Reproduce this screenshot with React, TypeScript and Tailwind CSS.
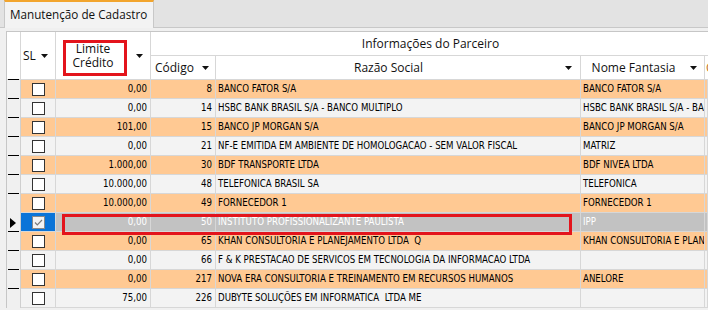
import { Fragment } from "react";

type Row = {
  limite: string;
  codigo: string;
  razao: string;
  fantasia: string;
  selected?: boolean;
};

const rows: Row[] = [
  { limite: "0,00", codigo: "8", razao: "BANCO FATOR S/A", fantasia: "BANCO FATOR S/A" },
  { limite: "0,00", codigo: "14", razao: "HSBC BANK BRASIL S/A - BANCO MULTIPLO", fantasia: "HSBC BANK BRASIL S/A - BANCO MULTIPLO" },
  { limite: "101,00", codigo: "15", razao: "BANCO JP MORGAN S/A", fantasia: "BANCO JP MORGAN S/A" },
  { limite: "0,00", codigo: "21", razao: "NF-E EMITIDA EM AMBIENTE DE HOMOLOGACAO - SEM VALOR FISCAL", fantasia: "MATRIZ" },
  { limite: "1.000,00", codigo: "30", razao: "BDF TRANSPORTE LTDA", fantasia: "BDF NIVEA LTDA" },
  { limite: "10.000,00", codigo: "48", razao: "TELEFONICA BRASIL SA", fantasia: "TELEFONICA" },
  { limite: "10.000,00", codigo: "49", razao: "FORNECEDOR 1", fantasia: "FORNECEDOR 1" },
  { limite: "0,00", codigo: "50", razao: "INSTITUTO PROFISSIONALIZANTE PAULISTA", fantasia: "IPP", selected: true },
  { limite: "0,00", codigo: "65", razao: "KHAN CONSULTORIA E PLANEJAMENTO LTDA  Q", fantasia: "KHAN CONSULTORIA E PLANEJAMENTO" },
  { limite: "0,00", codigo: "66", razao: "F & K PRESTACAO DE SERVICOS EM TECNOLOGIA DA INFORMACAO LTDA", fantasia: "" },
  { limite: "0,00", codigo: "217", razao: "NOVA ERA CONSULTORIA E TREINAMENTO EM RECURSOS HUMANOS", fantasia: "ANELORE" },
  { limite: "75,00", codigo: "226", razao: "DUBYTE SOLUÇÕES EM INFORMATICA  LTDA ME", fantasia: "" },
];

function Arrow() {
  return (
    <svg width="7" height="4" viewBox="0 0 7 4" className="shrink-0">
      <path d="M0 0h7L3.5 4z" fill="#111" />
    </svg>
  );
}

function DataRow({ row, index }: { row: Row; index: number }) {
  const orange = index % 2 === 0;
  const bg = row.selected ? "bg-[#c2c2c2] text-white" : orange ? "bg-[#ffc993] text-black" : "bg-[#f3f3f3] text-black";
  const cell = `h-[19px] border-b border-r border-[#d7d7d7] ${bg}`;
  return (
    <div className="flex">
      <div className="relative h-[19px] w-[14px] shrink-0 border-r border-[#cfcfcf] bg-[#f0f0f0]">
        {row.selected ? (
          <svg width="6" height="10" viewBox="0 0 6 10" className="absolute left-[3px] top-[5px]">
            <path d="M0 0l6 5-6 5z" fill="#000" />
          </svg>
        ) : (
          <div className="absolute left-[1px] top-[-1px] z-10 h-px w-[11px] bg-black" />
        )}
      </div>
      {row.selected ? (
        <div className="flex h-[19px] w-[35px] shrink-0 items-center justify-center border-b border-r border-[#d7d7d7] bg-[#0a74d8]">
          <svg width="13" height="13" viewBox="0 0 13 13">
            <rect x="0.5" y="0.5" width="12" height="12" fill="#f4f4f4" stroke="#8a8a8a" />
            <path d="M3 6.5l2.3 2.3L10 4" fill="none" stroke="#7a7a7a" strokeWidth="1.2" />
          </svg>
        </div>
      ) : (
        <div className={`flex h-[19px] w-[35px] shrink-0 items-center justify-center ${cell}`}>
          <div className="h-[13px] w-[13px] border border-[#333] bg-white" />
        </div>
      )}
      <div className={`${cell} relative flex w-[95px] shrink-0 items-center justify-end pr-[3px]`}>
        {row.limite}
        {row.selected && (
          <div className="pointer-events-none absolute left-[6px] top-[1px] z-20 h-[21px] w-[510px] border-[3px] border-[#e3141c]" />
        )}
      </div>
      <div className={`${cell} flex w-[65px] shrink-0 items-center justify-end pr-[3px]`}>{row.codigo}</div>
      <div className={`${cell} flex w-[365px] shrink-0 items-center overflow-hidden whitespace-pre pl-[2px]`}>{row.razao}</div>
      <div className={`${cell} flex w-[124px] shrink-0 items-center overflow-hidden whitespace-pre pl-[2px]`}>{row.fantasia}</div>
      <div className={`${cell} flex-1`} />
    </div>
  );
}

export default function App() {
  return (
    <div className="h-[310px] w-[708px] overflow-hidden bg-[#f0f0f0] font-['Open_Sans',sans-serif] text-[12px] text-[#111]">
      {/* tab strip */}
      <div className="flex h-[28px] border-b border-[#c8c8c8] bg-[#e3e3e3]">
        <div className="relative z-10 ml-[4px] flex h-[28px] w-[150px] items-center border-x border-t-2 border-x-[#c8c8c8] border-t-[#f2a52e] bg-[#f3f3f3] pb-[1px] pl-[5px] text-[11.7px]">
          Manutenção de Cadastro
        </div>
      </div>

      {/* grid */}
      <div className="ml-[6px] mt-[3px] border-l border-t border-[#c6c6c6] bg-white">
        <div className="flex h-[48px]">
          <div className="relative w-[14px] shrink-0 border-b border-r border-[#d7d7d7] bg-white" />
          <div className="flex w-[35px] shrink-0 items-center gap-[5px] border-b border-r border-[#d7d7d7] pl-[2px]">
            SL
            <Arrow />
          </div>
          <div className="relative flex w-[95px] shrink-0 items-center gap-[6px] border-b border-r border-[#d7d7d7] pr-[7px]">
            <div className="flex-1 text-center leading-[14px]">
              Limite
              <br />
              Crédito
            </div>
            <Arrow />
            <div className="pointer-events-none absolute left-[7px] top-[8px] h-[36px] w-[64px] border-[3px] border-[#e3141c]" />
          </div>
          <div className="flex min-w-0 flex-1 flex-col">
            <div className="flex h-[24px] items-center justify-center border-b border-[#d7d7d7] pl-[2px]">
              Informações do Parceiro
            </div>
            <div className="flex h-[24px]">
              <div className="flex w-[65px] shrink-0 items-center justify-between border-b border-r border-[#d7d7d7] pl-[4px] pr-[6px]">
                Código
                <Arrow />
              </div>
              <div className="flex w-[365px] shrink-0 items-center gap-[4px] border-b border-r border-[#d7d7d7] pr-[8px]">
                <span className="flex-1 text-center">Razão Social</span>
                <Arrow />
              </div>
              <div className="flex w-[124px] shrink-0 items-center gap-[4px] border-b border-r border-[#d7d7d7] pr-[7px]">
                <span className="flex-1 text-center">Nome Fantasia</span>
                <Arrow />
              </div>
              <div className="flex flex-1 items-center overflow-hidden border-b border-[#d7d7d7] pl-[1px] text-[#c07020]">
                C
              </div>
            </div>
          </div>
        </div>

        <div className="font-['DejaVu_Sans_Condensed','Liberation_Sans',sans-serif] text-[9.6px]">
          {rows.map((row, i) => (
            <Fragment key={row.codigo}>
              <DataRow row={row} index={i} />
            </Fragment>
          ))}
        </div>
      </div>
    </div>
  );
}
